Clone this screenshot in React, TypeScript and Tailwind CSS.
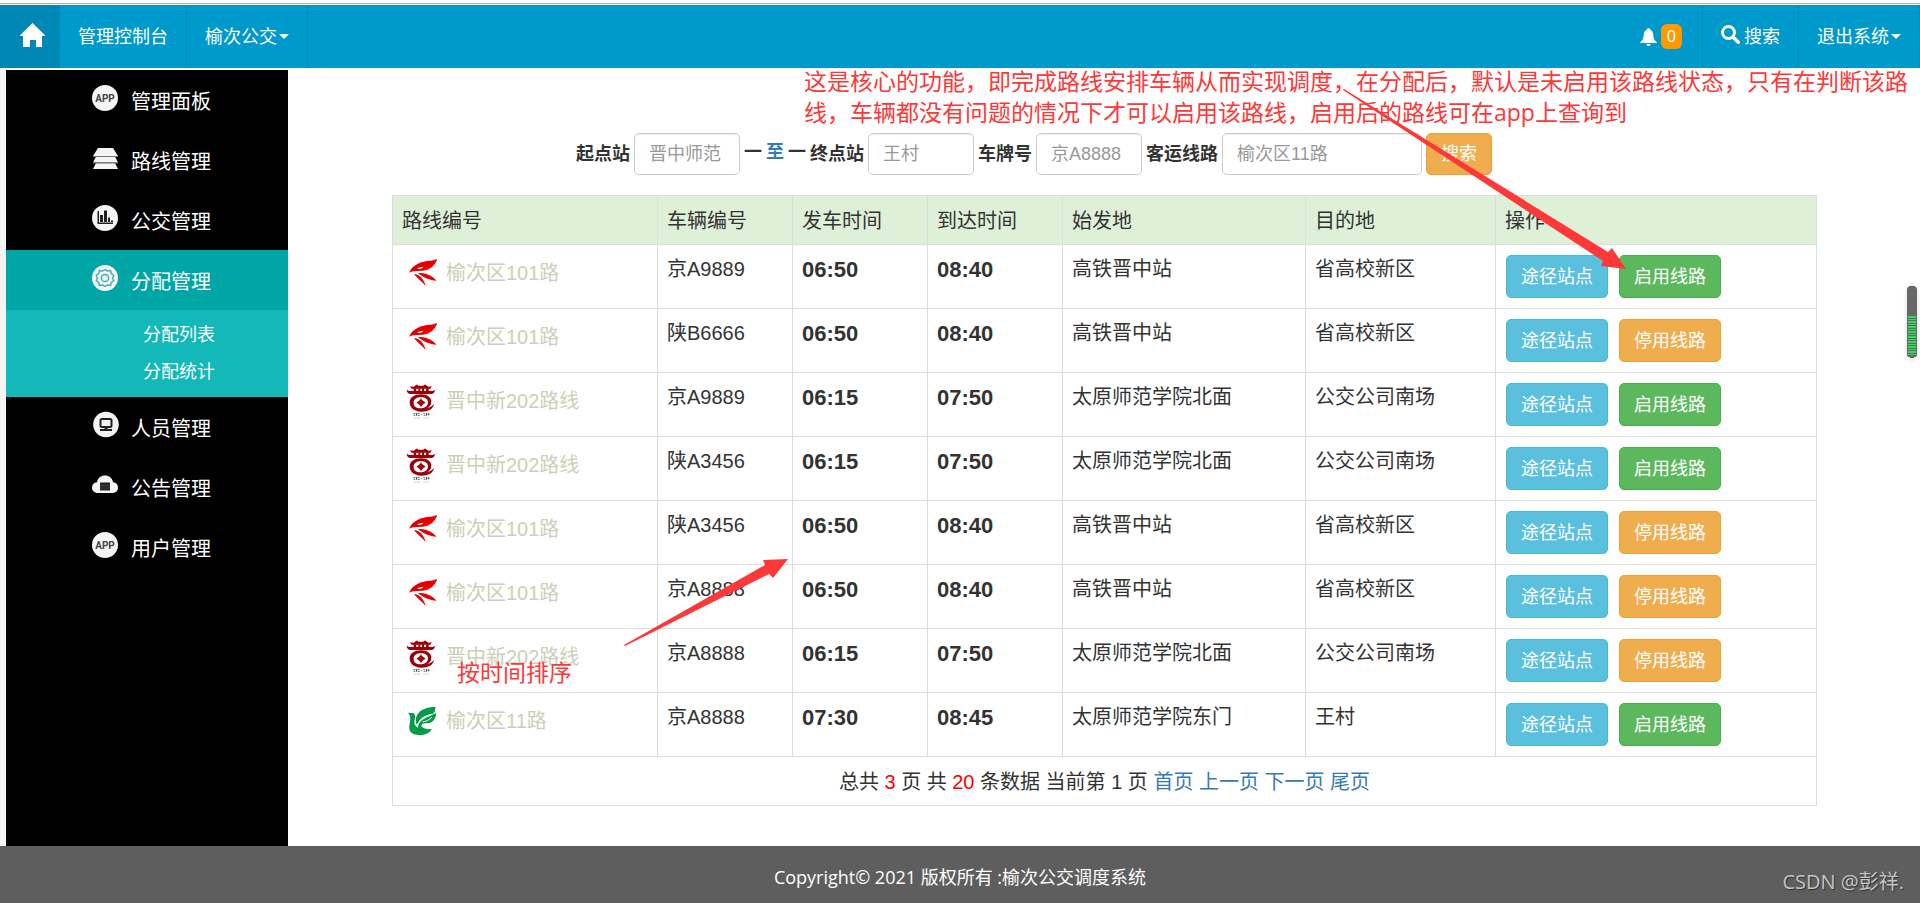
import { useState, type FC, type ReactNode } from "react";

type Logo = "bird" | "jin" | "leaf";

interface Trip {
    logo: Logo;
    route: string;
    plate: string;
    depart: string;
    arrive: string;
    from: string;
    to: string;
    enabled: boolean;
}

const trips: Trip[] = [
    { logo: "bird", route: "榆次区101路", plate: "京A9889", depart: "06:50", arrive: "08:40", from: "高铁晋中站", to: "省高校新区", enabled: false },
    { logo: "bird", route: "榆次区101路", plate: "陕B6666", depart: "06:50", arrive: "08:40", from: "高铁晋中站", to: "省高校新区", enabled: true },
    { logo: "jin", route: "晋中新202路线", plate: "京A9889", depart: "06:15", arrive: "07:50", from: "太原师范学院北面", to: "公交公司南场", enabled: false },
    { logo: "jin", route: "晋中新202路线", plate: "陕A3456", depart: "06:15", arrive: "07:50", from: "太原师范学院北面", to: "公交公司南场", enabled: false },
    { logo: "bird", route: "榆次区101路", plate: "陕A3456", depart: "06:50", arrive: "08:40", from: "高铁晋中站", to: "省高校新区", enabled: true },
    { logo: "bird", route: "榆次区101路", plate: "京A8888", depart: "06:50", arrive: "08:40", from: "高铁晋中站", to: "省高校新区", enabled: true },
    { logo: "jin", route: "晋中新202路线", plate: "京A8888", depart: "06:15", arrive: "07:50", from: "太原师范学院北面", to: "公交公司南场", enabled: true },
    { logo: "leaf", route: "榆次区11路", plate: "京A8888", depart: "07:30", arrive: "08:45", from: "太原师范学院东门", to: "王村", enabled: false },
];

const columns = [
    { title: "路线编号", width: "w-[265px]" },
    { title: "车辆编号", width: "w-[135px]" },
    { title: "发车时间", width: "w-[135px]" },
    { title: "到达时间", width: "w-[135px]" },
    { title: "始发地", width: "w-[243px]" },
    { title: "目的地", width: "w-[190px]" },
    { title: "操作", width: "" },
];

/* ---------- route logos ---------- */

const RouteLogo: FC<{ logo: Logo }> = ({ logo }) => (
    <svg viewBox="0 0 114 114" className="size-[38px] shrink-0" aria-hidden="true">
        {logo === "bird" && (
            <g fill="#e60000">
                <path
                    fillRule="evenodd"
                    d="M21 53C30 34 46 24 64 20C80 17 95 18 106 12C101 26 92 38 76 44C58 50 38 44 21 53ZM46 42C52 43 60 41 64 37C58 35 50 37 46 42Z"
                />
                <path d="M48 54C64 52 92 60 103 77C84 76 64 68 48 54Z" />
                <path d="M36 57C52 58 66 72 71 93C62 82 50 74 36 57Z" />
            </g>
        )}
        {logo === "jin" && (
            <g fill="#9c0006">
                <path d="M24 10C32 12 36 11 39 9L42 5H47L49 8H65L67 5H72L75 9C79 11 84 12 90 10L85 17H29Z" />
                <path d="M35 16H43V26H35ZM49 16H55V26H49ZM60 16H66V26H60ZM72 16H80V26H72Z" />
                <path d="M14 20C19 24 24 24 29 24H86C90 24 95 24 99 20C98 29 94 33 88 33H26C19 33 15 29 14 20Z" />
                <path
                    fillRule="evenodd"
                    d="M57 34C77 34 88 44 88 56C88 66 82 72 74 75C84 74 92 68 96 62C95 77 79 86 58 86C36 86 23 74 23 58C23 43 37 34 57 34ZM57 43C43 43 35 49 35 59C35 70 43 76 56 76C69 76 78 69 78 58C78 49 70 43 57 43Z"
                />
                <path d="M57 46C60 52 65 56 71 59C65 62 60 66 57 72C54 66 49 62 43 59C49 56 54 52 57 46Z" />
                <g fill="#555">
                    <path d="M34 91H40V94H34ZM42 90H46V98H42ZM48 91H53V94H48ZM35 96H40V98H35ZM48 96H53V98H48ZM57 94H60V96H57ZM64 91H69V94H64ZM65 96H70V98H65ZM72 90H75V98H72ZM77 91H82V97H77Z" />
                    <path d="M36 104H43V106H36ZM45 104H54V106H45ZM63 104H70V106H63ZM72 104H80V106H72Z" opacity="0.6" />
                </g>
            </g>
        )}
        {logo === "leaf" && (
            <g fill="#079a48">
                <path d="M18 29L36 31C42 38 38 48 37 58C38 70 48 77 62 79L89 78C84 90 70 96 52 96C32 96 20 88 22 70C23 55 30 42 18 29Z" />
                <path d="M43 64C36 36 54 12 101 12C98 22 100 28 93 32C74 34 56 42 48 60Z" />
                <path d="M49 66C56 48 76 44 102 30C103 50 90 62 70 61C62 62 57 65 58 70C62 76 70 78 78 78L58 84L48 74Z" />
                <path d="M62 57C72 55 82 51 89 43" fill="none" stroke="#fff" strokeWidth="3" />
            </g>
        )}
    </svg>
);

/* ---------- navbar icons ---------- */

const HomeIcon: FC = () => (
    <svg viewBox="0 0 25 24" className="h-6 w-[25px]" fill="#fff" aria-hidden="true">
        <path d="M12.500 0L25 12.200V13H22V24H16V17H10V24H3V13H0V12.200Z" />
    </svg>
);

const BellIcon: FC = () => (
    <svg viewBox="0 0 17 18" className="h-[18px] w-[17px]" fill="#fff" aria-hidden="true">
        <path d="M8.500 0C9.600 0 10 .8 10 1.600C12.500 2.500 13.200 5 13.400 8C13.600 11 14.500 12.500 17 14.500V15H0V14.500C2.500 12.500 3.400 11 3.600 8C3.800 5 4.500 2.500 7 1.600C7 .8 7.400 0 8.500 0ZM6.500 16H10.500C10.300 17.400 9.500 18 8.500 18S6.700 17.400 6.500 16Z" />
    </svg>
);

const SearchIcon: FC = () => (
    <svg viewBox="0 0 19 19" className="mb-1 size-[19px]" fill="none" stroke="#fff" aria-hidden="true">
        <circle cx="7.500" cy="7.500" r="6" strokeWidth="2.800" />
        <path d="M12.200 12.200L17.300 17.300" strokeWidth="3.400" strokeLinecap="round" />
    </svg>
);

const Caret: FC = () => (
    <span className="ml-0.5 border-x-[5px] border-t-[5px] border-x-transparent border-t-white" />
);

/* ---------- sidebar icons ---------- */

const AppIcon = (
    <>
        <circle cx="13" cy="13" r="13" fill="#f4f4f4" />
        <text x="13" y="17" textAnchor="middle" fontSize="10" fontWeight="700" fill="#444" fontFamily="Roboto, sans-serif">
            APP
        </text>
    </>
);

const LayersIcon = (
    <>
        <path d="M1 24L4 18H23L26 24Z" fill="#f4f4f4" />
        <path d="M1 17.500L4 11.500H23L26 17.500Z" fill="#f4f4f4" />
        <path d="M1 18H26" stroke="#777" />
        <path d="M1 11L6 3H21L26 11Z" fill="#f4f4f4" />
        <path d="M1 11.500H26" stroke="#777" />
    </>
);

const ChartIcon = (
    <>
        <circle cx="13" cy="13" r="13" fill="#f4f4f4" />
        <path d="M5.500 6H7V17.500H21V19H5.500ZM8 10H11V17H8ZM12 5.500H15V17H12ZM16 12.500H18V17H16ZM19 15.500H21V17H19Z" fill="#222" />
    </>
);

const GearIcon = (
    <>
        <circle cx="13" cy="13" r="13" fill="#f4f4f4" />
        <g fill="none" stroke="#3fb0b0" strokeWidth="1.500">
            <circle cx="13" cy="13" r="3.600" />
            <path d="M13 4.500L15.200 6L18.500 5.500L19.300 8.500L21.800 10.500L20.500 13L21.800 15.500L19.300 17.500L18.500 20.500L15.200 20L13 21.500L10.800 20L7.500 20.500L6.700 17.500L4.200 15.500L5.500 13L4.200 10.500L6.700 8.500L7.500 5.500L10.800 6Z" strokeLinejoin="round" />
        </g>
    </>
);

const MonitorIcon = (
    <>
        <circle cx="14" cy="12.500" r="12.800" fill="#f4f4f4" />
        <rect x="8.500" y="7" width="11" height="8" rx="1.500" fill="none" stroke="#222" strokeWidth="2" />
        <path d="M12.500 15H15.500V17H20V19H8V17H12.500Z" fill="#222" />
    </>
);

const CloudIcon = (
    <>
        <path d="M6 21C2 21 0 18.500 0 15.500C0 12.500 2 10.500 5 10.300C5.500 6 9 3.500 13 3.500S20.500 6 21 10.300C24 10.500 26 12.500 26 15.500C26 18.500 24 21 20 21Z" fill="#f4f4f4" />
        <path d="M8 10.500H18V18.500H8Z" fill="#222" />
        <path d="M8 13.500H18M8 16H18" stroke="#555" strokeWidth="0.600" />
    </>
);

const menu: { label: string; icon: ReactNode; children?: string[] }[] = [
    { label: "管理面板", icon: AppIcon },
    { label: "路线管理", icon: LayersIcon },
    { label: "公交管理", icon: ChartIcon },
    { label: "分配管理", icon: GearIcon, children: ["分配列表", "分配统计"] },
    { label: "人员管理", icon: MonitorIcon },
    { label: "公告管理", icon: CloudIcon },
    { label: "用户管理", icon: AppIcon },
];

const Header: FC = () => {
    const cell = "flex items-center px-[18px]";

    return (
        <header className="mt-[3px] border-t border-[#b0b0b0] pt-px">
            <nav className="flex h-[63px] bg-[#0099cc] text-lg text-white">
                <a href="#home" aria-label="首页" className="flex w-[60px] items-center justify-center bg-[#0088b5] pb-1 pl-1">
                    <HomeIcon />
                </a>
                <a href="#console" className={`${cell} border-r border-[#008ab8]`}>管理控制台</a>
                <a href="#company" className={`${cell} border-r border-[#008ab8]`}>
                    榆次公交
                    <Caret />
                </a>
                <div className="ml-auto flex">
                    <a href="#messages" className={`${cell} gap-1`}>
                        <BellIcon />
                        <span className="mr-0.5 rounded-md bg-[#ff9900] px-[6px] text-base leading-[25px]">0</span>
                    </a>
                    <a href="#search" className={`${cell} gap-1 border-l border-[#008ab8]`}>
                        <SearchIcon />
                        搜索
                    </a>
                    <a href="#logout" className={`${cell} border-x border-[#008ab8]`}>
                        退出系统
                        <Caret />
                    </a>
                </div>
            </nav>
        </header>
    );
};

const Sidebar: FC = () => {
    const [active, setActive] = useState("分配管理");

    return (
        <aside className="w-[282px] shrink-0 bg-black text-white">
            {menu.map((item) => (
                <div key={item.label}>
                    <button
                        type="button"
                        onClick={() => setActive(item.label)}
                        className={`flex h-[60px] w-full gap-[13px] pl-[86px] text-xl ${active === item.label ? "bg-[#00a6a6]" : ""}`}
                    >
                        <svg viewBox="0 0 26 26" className="mt-[15px] size-[26px] overflow-visible" aria-hidden="true">
                            {item.icon}
                        </svg>
                        <span className="leading-[64px]">{item.label}</span>
                    </button>
                    {item.children && active === item.label && (
                        <ul className="bg-[#13b8b8] pt-[7px] pb-[6px] text-lg leading-[37px]">
                            {item.children.map((child) => (
                                <li key={child}>
                                    <a href="#sub" className="block pl-[137px]">{child}</a>
                                </li>
                            ))}
                        </ul>
                    )}
                </div>
            ))}
        </aside>
    );
};

const SearchForm: FC = () => {
    const input =
        "h-[42px] rounded-[5px] border border-[#ccc] bg-white px-[14px] font-normal shadow-[inset_0_1px_1px_rgba(0,0,0,0.075)] outline-none placeholder:text-[#999]";

    return (
        <form
            onSubmit={(e) => e.preventDefault()}
            className="flex items-center gap-1 pl-[184px] text-lg font-bold whitespace-nowrap"
        >
            <label htmlFor="from">起点站</label>
            <input id="from" placeholder="晋中师范" className={`${input} w-[106px]`} />
            <span className="mb-1">一</span>
            <span className="mb-1 text-[#337ab7]">至</span>
            <span className="mb-1">一</span>
            <label htmlFor="to">终点站</label>
            <input id="to" placeholder="王村" className={`${input} w-[106px]`} />
            <label htmlFor="plate">车牌号</label>
            <input id="plate" placeholder="京A8888" className={`${input} w-[106px]`} />
            <label htmlFor="route">客运线路</label>
            <input id="route" placeholder="榆次区11路" className={`${input} w-[200px]`} />
            <button type="submit" className="h-[42px] rounded-[5px] border border-[#eea236] bg-[#f0ad4e] px-[14px] font-normal text-white">
                搜索
            </button>
        </form>
    );
};

const TripTable: FC = () => {
    const td = "border border-[#ddd] px-[9px] pt-[10px] align-top";
    const btn = "h-[43px] rounded-[5px] border px-[14px] text-lg text-white";

    return (
        <table className="mt-5 w-full table-fixed border-collapse text-xl">
            <thead>
                <tr className="h-[49px] bg-[#dff0d8]">
                    {columns.map((col) => (
                        <th key={col.title} className={`${col.width} border border-[#ddd] px-[9px] pt-0.5 text-left font-normal`}>
                            {col.title}
                        </th>
                    ))}
                </tr>
            </thead>
            <tbody>
                {trips.map((trip, i) => (
                    <tr key={i} className="h-16">
                        <td className={td}>
                            <a href="#route" className="flex items-center gap-[6px] text-[#c9d0b8]">
                                <RouteLogo logo={trip.logo} />
                                <span className="mb-0.5">{trip.route}</span>
                            </a>
                        </td>
                        <td className={td}>{trip.plate}</td>
                        <td className={`${td} text-[22px] leading-[30px] font-bold`}>{trip.depart}</td>
                        <td className={`${td} text-[22px] leading-[30px] font-bold`}>{trip.arrive}</td>
                        <td className={td}>{trip.from}</td>
                        <td className={td}>{trip.to}</td>
                        <td className={td}>
                            <div className="flex gap-[11px] pl-px">
                                <button type="button" className={`${btn} border-[#46b8da] bg-[#5bc0de]`}>途径站点</button>
                                <button
                                    type="button"
                                    className={`${btn} ${trip.enabled ? "border-[#eea236] bg-[#f0ad4e]" : "border-[#4cae4c] bg-[#5cb85c]"}`}
                                >
                                    {trip.enabled ? "停用线路" : "启用线路"}
                                </button>
                            </div>
                        </td>
                    </tr>
                ))}
                <tr className="h-[49px]">
                    <td colSpan={7} className="border border-[#ddd] pt-0.5 text-center">
                        总共 <span className="text-[#ff0000]">3</span> 页 共 <span className="text-[#ff0000]">20</span> 条数据 当前第 1 页{" "}
                        <a href="#first" className="text-[#337ab7]">首页</a>{" "}
                        <a href="#prev" className="text-[#337ab7]">上一页</a>{" "}
                        <a href="#next" className="text-[#337ab7]">下一页</a>{" "}
                        <a href="#last" className="text-[#337ab7]">尾页</a>
                    </td>
                </tr>
            </tbody>
        </table>
    );
};

/* Red hand notes and arrows lying over the page */
const Notes: FC = () => (
    <div className="pointer-events-none absolute inset-0 overflow-hidden font-['Open_Sans','Noto_Sans_CJK_SC',sans-serif] text-[23px] leading-[31px] text-[#fd3838]">
        <p className="absolute top-[66px] left-[804px] whitespace-nowrap">
            这是核心的功能，即完成路线安排车辆从而实现调度，在分配后，默认是未启用该路线状态，只有在判断该路
            <br />
            线，车辆都没有问题的情况下才可以启用该路线，启用后的路线可在app上查询到
        </p>
        <p className="absolute top-[657px] left-[457px]">按时间排序</p>
        <svg className="absolute top-0 left-0 h-[903px] w-[1920px]" fill="#fd3838" aria-hidden="true">
            <path d="M1343 90L1344 89L1608 252L1612 248L1626 269L1601 266L1603 261Z" />
            <path d="M624 645L765 565L763 560L788 559L773 578L769 574L625 646Z" />
        </svg>
    </div>
);

/* Usage gauge pinned to the right edge */
const Gauge: FC = () => (
    <svg viewBox="0 0 10 72" className="pointer-events-none absolute top-[286px] right-[3px] h-[72px] w-[10px] drop-shadow-sm" aria-hidden="true">
        <path d="M2 0H8V1H9L10 3V69L9 71H7V72H3V71H1L0 69V3L1 1H2Z" fill="#686868" />
        {Array.from({ length: 8 }, (_, i) => (
            <g key={i} fill="#2edc5c">
                <rect x="1" y={30 + i * 5} width="8" height="2" />
                <rect x="1" y={33 + i * 5} width="8" height="1" />
            </g>
        ))}
    </svg>
);

export default function App() {
    return (
        <div className="relative flex min-h-screen flex-col bg-white font-['Liberation_Sans','Noto_Sans_CJK_SC',sans-serif] text-[#333]">
            <Header />
            <div className="flex grow border-l-[6px] border-[#f5f5f5] pt-0.5">
                <Sidebar />
                <main className="min-w-0 grow pt-[63px] pr-[103px] pb-10 pl-[104px]">
                    <SearchForm />
                    <TripTable />
                </main>
            </div>
            <footer className="relative flex h-[57px] items-center justify-center bg-[#5e5e5e] pt-1 font-['Open_Sans','Noto_Sans_CJK_SC',sans-serif] text-lg text-white">
                Copyright© 2021 版权所有 :榆次公交调度系统
                <span className="absolute right-4 bottom-[7px] text-xl text-[#c4c4c4] [text-shadow:1px_1px_1px_#333]">CSDN @彭祥.</span>
            </footer>
            <Gauge />
            <Notes />
        </div>
    );
}
